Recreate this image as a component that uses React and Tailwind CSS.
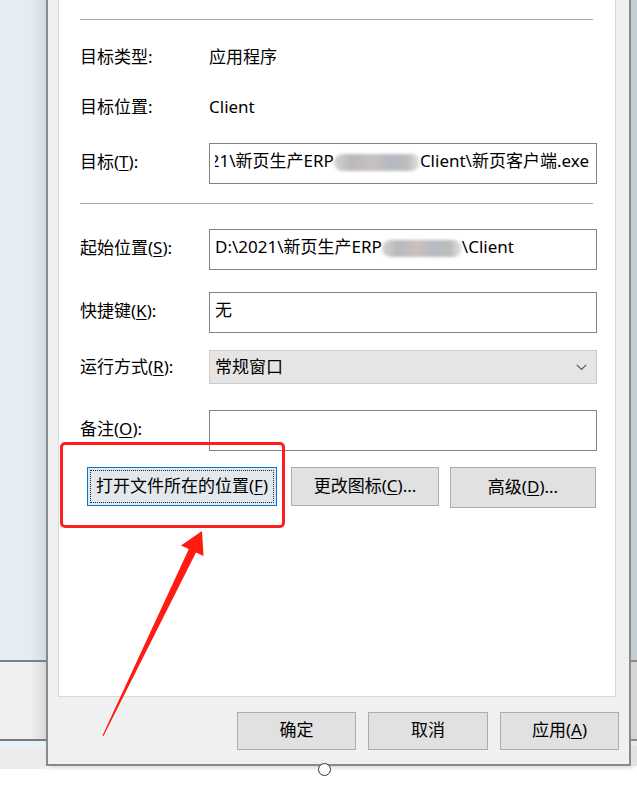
import React from 'react';

const font = { fontFamily: '"Noto Sans", "Noto Sans CJK SC", sans-serif' };

// label with underlined access key, e.g. 目标(T):
const Label = ({ text, hotkey, suffix = ':' }) => (
  <span>
    {text}
    {hotkey && (
      <>
        (<u className="underline-offset-2">{hotkey}</u>)
      </>
    )}
    {suffix}
  </span>
);

const Smudge = ({ w }) => (
  <span
    className="inline-block h-[17px] rounded-full align-middle blur-[1.5px] bg-[linear-gradient(90deg,#d4d4d4,#b9b9bd_20%,#c9c0bc_45%,#b6bac2_65%,#bcbcbc_85%,#e6e6e6)]"
    style={{ width: w }}
  />
);

const FieldRow = ({ label, children, mt, h = 'h-[41px]' }) => (
  <div className={`flex items-center ${mt}`}>
    <div className="w-[129px] shrink-0 pb-[4px]">{label}</div>
    <div className={`flex-1 ${h} border border-[#828282] bg-white flex items-center overflow-hidden pl-[5px] pr-[7px] pb-[6px]`}>
      {children}
    </div>
  </div>
);

const Btn = ({ children, className = '' }) => (
  <div className={`flex items-center justify-center bg-[#e1e1e1] border border-[#adadad] ${className}`}>
    <span className="pb-[2px]">{children}</span>
  </div>
);

export default function App() {
  return (
    <div className="relative w-[637px] h-[799px] bg-white overflow-hidden text-[17px] text-black" style={font}>
      <div className="flex items-start">
        {/* desktop behind the dialog, left side */}
        <div className="w-[46px] h-[769px] flex flex-col">
          <div className="h-[660px] bg-[linear-gradient(90deg,#e3edf3_65%,#d2dce2)]" />
          <div className="h-[2px] bg-[#7f7f7f]" />
          <div className="h-[77px] bg-[linear-gradient(90deg,#f0f0f0_65%,#dadada)]" />
          <div className="h-[2px] bg-[#7a7a7a]" />
          <div className="h-[6px] bg-[#e8f1f6]" />
          <div className="flex-1 bg-[#ececec]" />
        </div>

        {/* properties dialog */}
        <div className="w-[585px] h-[766px] bg-[#f0f0f0] border-x-2 border-b-2 border-[#8a8a8a] shadow-[2px_2px_4px_rgba(0,0,0,0.15)] flex flex-col">
          <div className="ml-[10px] mr-[13px] h-[697px] bg-white border-x border-b border-[#dadada] pl-[21px] pr-[18px]">
            <div className="mt-[19px] mr-[4px] h-px bg-[#a9a9a9]" />

            <div className="flex items-center h-[22px] mt-[26px]">
              <div className="w-[129px]"><Label text="目标类型" /></div>
              <span>应用程序</span>
            </div>
            <div className="flex items-center h-[22px] mt-[28px]">
              <div className="w-[129px]"><Label text="目标位置" /></div>
              <span>Client</span>
            </div>

            <FieldRow mt="mt-[25px]" label={<Label text="目标" hotkey="T" />}>
              <div className="flex-1 flex justify-end overflow-hidden">
                <span className="shrink-0 whitespace-nowrap">
                  D:\2021\新页生产ERP<Smudge w={86} />Client\新页客户端.exe
                </span>
              </div>
            </FieldRow>

            <div className="mt-[19px] mr-[4px] h-px bg-[#a9a9a9]" />

            <FieldRow mt="mt-[25px]" label={<Label text="起始位置" hotkey="S" />}>
              <span className="whitespace-nowrap">
                D:\2021\新页生产ERP<Smudge w={80} />\Client
              </span>
            </FieldRow>

            <FieldRow mt="mt-[22px]" label={<Label text="快捷键" hotkey="K" />}>
              <span>无</span>
            </FieldRow>

            <div className="flex items-center mt-[17px]">
              <div className="w-[129px] shrink-0"><Label text="运行方式" hotkey="R" /></div>
              <div className="flex-1 h-[34px] bg-[#e5e5e5] border border-[#cccccc] flex items-center justify-between pl-[5px] pr-[9px]">
                <span>常规窗口</span>
                <svg width="11" height="7" viewBox="0 0 11 7" fill="none">
                  <path d="M0.8 0.8 L5.5 5.5 L10.2 0.8" stroke="#555" strokeWidth="1.1" />
                </svg>
              </div>
            </div>

            <FieldRow mt="mt-[26px]" label={<Label text="备注" hotkey="O" />}>
              <span />
            </FieldRow>

            <div className="flex items-start mt-[16px] ml-[7px]">
              <div className="w-[190px] h-[39px] border border-[#0078d7] bg-[#e3e8ec] p-[2px]">
                <div className="w-full h-full border border-dotted border-[#222] flex items-center justify-center">
                  <span className="pb-[2px]"><Label text="打开文件所在的位置" hotkey="F" suffix="" /></span>
                </div>
              </div>
              <Btn className="ml-[14px] w-[148px] h-[39px]"><Label text="更改图标" hotkey="C" suffix="..." /></Btn>
              <Btn className="ml-[11px] w-[146px] h-[41px]"><Label text="高级" hotkey="D" suffix="..." /></Btn>
            </div>
          </div>

          <div className="flex justify-end gap-[12px] mt-[15px] pr-[10px]">
            <Btn className="w-[119px] h-[38px]">确定</Btn>
            <Btn className="w-[120px] h-[38px]">取消</Btn>
            <Btn className="w-[119px] h-[38px]"><Label text="应用" hotkey="A" suffix="" /></Btn>
          </div>
        </div>

        {/* desktop, right side */}
        <div className="flex-1 h-[766px] flex flex-col">
          <div className="h-[660px] bg-[#c3cfd4]" />
          <div className="h-[2px] bg-[#8a8a8a]" />
          <div className="h-[77px] bg-[#d6d6d6]" />
          <div className="h-[2px] bg-[#8a8a8a]" />
          <div className="h-[5px] bg-[#e4ecf0]" />
          <div className="flex-1 bg-[#e2e2e2]" />
        </div>
      </div>

      {/* red annotation */}
      <div className="absolute left-[60px] top-[442px] w-[225px] h-[86px] border-[3px] border-[#ff1e1e] rounded-[5px]" />
      <svg className="absolute inset-0 pointer-events-none" width="637" height="799" viewBox="0 0 637 799">
        <polygon
          points="202,531 203.5,556 196,552.5 103.5,736 102.5,735.5 188.8,549 181,545.5"
          fill="#ff1a12"
        />
      </svg>

      {/* resize handle */}
      <div className="absolute left-[318px] top-[763px] w-[13px] h-[13px] rounded-full bg-white border border-[#333]" />
    </div>
  );
}
